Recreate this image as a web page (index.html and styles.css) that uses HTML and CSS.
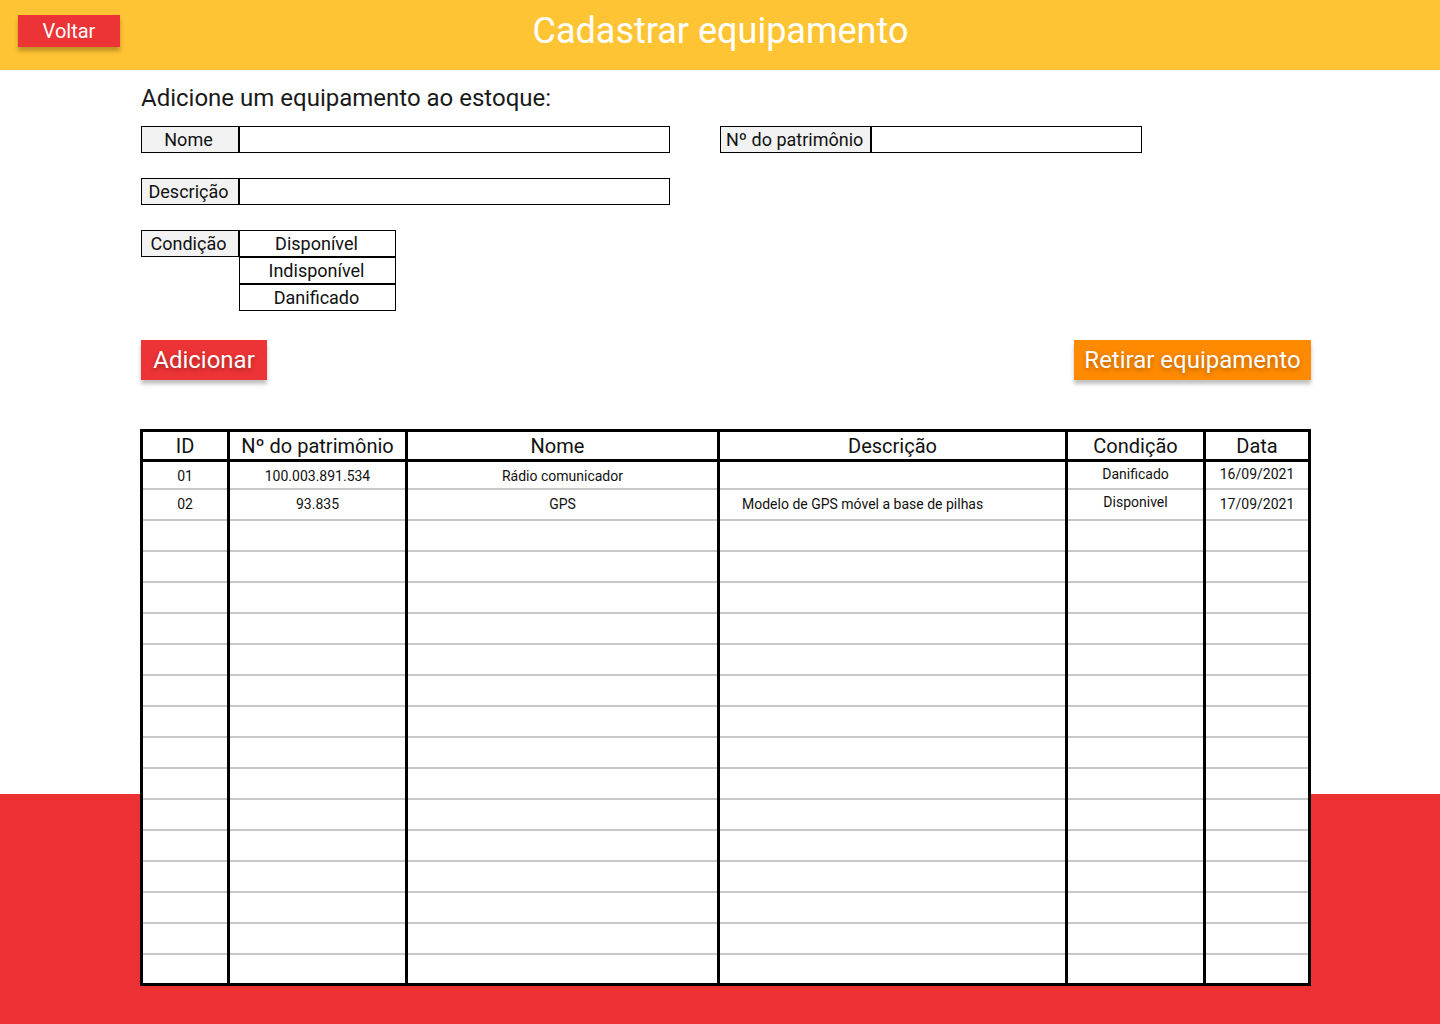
FILE: index.html
```html
<!DOCTYPE html>
<html lang="pt-BR">
<head>
<meta charset="utf-8">
<title>Cadastrar equipamento</title>
<link rel="stylesheet" href="styles.css">
</head>
<body>
<header class="topbar">
  <div class="topbar-left"><button class="btn btn-back">Voltar</button></div>
  <h1 class="title">Cadastrar equipamento</h1>
  <div class="topbar-right"></div>
</header>

<main class="content">
  <h2 class="subtitle">Adicione um equipamento ao estoque:</h2>

  <div class="form-grid">
    <div class="field">
      <span class="field-label">Nome</span>
      <span class="field-input w-main"></span>
    </div>
    <div class="field field-right">
      <span class="field-label label-wide">Nº do patrimônio</span>
      <span class="field-input w-side"></span>
    </div>
  </div>

  <div class="field">
    <span class="field-label">Descrição</span>
    <span class="field-input w-main"></span>
  </div>

  <div class="field field-cond">
    <span class="field-label">Condição</span>
    <div class="options">
      <span class="option">Disponível</span>
      <span class="option">Indisponível</span>
      <span class="option">Danificado</span>
    </div>
  </div>

  <div class="actions">
    <button class="btn btn-big btn-red">Adicionar</button>
    <button class="btn btn-big btn-orange">Retirar equipamento</button>
  </div>

  <table class="stock">
    <colgroup>
      <col class="c-id"><col class="c-pat"><col class="c-nome"><col class="c-desc"><col class="c-cond"><col class="c-data">
    </colgroup>
    <thead>
      <tr><th>ID</th><th>Nº do patrimônio</th><th class="th-nome">Nome</th><th>Descrição</th><th>Condição</th><th>Data</th></tr>
    </thead>
    <tbody>
      <tr class="r1"><td class="low">01</td><td class="low">100.003.891.534</td><td class="low">Rádio comunicador</td><td></td><td class="up">Danificado</td><td class="up">16/09/2021</td></tr>
      <tr><td>02</td><td>93.835</td><td>GPS</td><td class="left">Modelo de GPS móvel a base de pilhas</td><td class="up">Disponivel</td><td>17/09/2021</td></tr>
      <tr><td></td><td></td><td></td><td></td><td></td><td></td></tr>
      <tr><td></td><td></td><td></td><td></td><td></td><td></td></tr>
      <tr><td></td><td></td><td></td><td></td><td></td><td></td></tr>
      <tr><td></td><td></td><td></td><td></td><td></td><td></td></tr>
      <tr><td></td><td></td><td></td><td></td><td></td><td></td></tr>
      <tr><td></td><td></td><td></td><td></td><td></td><td></td></tr>
      <tr><td></td><td></td><td></td><td></td><td></td><td></td></tr>
      <tr><td></td><td></td><td></td><td></td><td></td><td></td></tr>
      <tr><td></td><td></td><td></td><td></td><td></td><td></td></tr>
      <tr><td></td><td></td><td></td><td></td><td></td><td></td></tr>
      <tr><td></td><td></td><td></td><td></td><td></td><td></td></tr>
      <tr><td></td><td></td><td></td><td></td><td></td><td></td></tr>
      <tr><td></td><td></td><td></td><td></td><td></td><td></td></tr>
      <tr><td></td><td></td><td></td><td></td><td></td><td></td></tr>
      <tr><td></td><td></td><td></td><td></td><td></td><td></td></tr>
    </tbody>
  </table>
</main>
</body>
</html>
```

FILE: styles.css
```css
* { box-sizing: border-box; }

html, body {
  margin: 0;
  padding: 0;
}

body {
  width: 1440px;
  min-height: 1024px;
  font-family: Roboto, "Noto Sans", "Liberation Sans", sans-serif;
  color: #1a1a1a;
  background: linear-gradient(to bottom, #ffffff 0, #ffffff 794px, #ec3134 794px, #ec3134 100%);
}

/* ---------- top bar ---------- */
.topbar {
  height: 70px;
  background: #ffc433;
  display: grid;
  grid-template-columns: 1fr auto 1fr;
  align-items: center;
}

.topbar-left {
  padding-left: 18px;
  align-self: start;
  padding-top: 15px;
}

.title {
  margin: 0;
  font-size: 36px;
  font-weight: 400;
  color: #ffffff;
  line-height: 1;
  padding-bottom: 8px;
  padding-left: 1px;
}

.btn {
  font-family: inherit;
  border: none;
  color: #ffffff;
  cursor: pointer;
  padding: 0;
}

.btn-back {
  width: 102px;
  height: 32px;
  background: #ec3335;
  font-size: 20px;
  box-shadow: 0 4px 4px rgba(0, 0, 0, 0.25);
}

/* ---------- content ---------- */
.content {
  margin-left: 140px;
  width: 1171px;
}

.subtitle {
  margin: 0;
  padding-top: 14px;
  font-size: 24px;
  font-weight: 400;
  line-height: 28px;
  color: #1a1a1a;
  padding-left: 1px;
}

.form-grid {
  display: flex;
  margin-top: 14px;
}

.field {
  display: flex;
  height: 27px;
  margin-left: 1px;
  margin-bottom: 25px;
}

.field-right {
  margin-left: 50px;
}

.field-label {
  display: flex;
  align-items: center;
  justify-content: center;
  width: 98px;
  height: 27px;
  border: 1px solid #000;
  background: #f2f2f2;
  font-size: 18px;
  color: #111;
  padding-right: 3px;
}

.label-wide {
  width: 151px;
  justify-content: flex-start;
  padding-left: 5px;
  padding-right: 0;
}

.field-input {
  display: block;
  height: 27px;
  border: 1px solid #000;
  background: #fff;
}

.w-main { width: 431px; }
.w-side { width: 271px; }

.field-cond {
  height: auto;
  align-items: flex-start;
  margin-bottom: 0;
}

.options {
  display: flex;
  flex-direction: column;
  width: 157px;
}

.option {
  display: flex;
  align-items: center;
  justify-content: center;
  height: 27px;
  border: 1px solid #000;
  font-size: 18px;
  color: #111;
  padding-right: 2px;
}

.actions {
  display: flex;
  justify-content: space-between;
  margin-top: 29px;
  padding-left: 1px;
}

.btn-big {
  height: 40px;
  font-size: 24px;
  padding: 0 12px;
  text-shadow: 0 2px 4px rgba(0, 0, 0, 0.3);
  box-shadow: 0 4px 4px rgba(0, 0, 0, 0.25);
}

.btn-red { background: #ec3335; width: 126px; }
.btn-orange { background: #ff8a00; width: 237px; padding: 0 10px; }

/* ---------- table ---------- */
.stock {
  margin-top: 49px;
  width: 1168px;
  border-collapse: collapse;
  table-layout: fixed;
  border: 3px solid #000;
  background: #fff;
}

.c-id { width: 87px; }
.c-pat { width: 178px; }
.c-nome { width: 312px; }
.c-desc { width: 348px; }
.c-cond { width: 138px; }
.c-data { width: 105px; }

.stock th {
  height: 30px;
  font-size: 20px;
  font-weight: 400;
  color: #111;
  border-left: 3px solid #000;
  border-right: 3px solid #000;
  border-bottom: 3px solid #000;
  padding: 0;
  line-height: 1;
}

.stock th.th-nome {
  padding-right: 10px;
}

.stock td {
  height: 31px;
  font-size: 14px;
  color: #111;
  text-align: center;
  border-left: 3px solid #000;
  border-right: 3px solid #000;
  border-bottom: 2px solid #c8c8c8;
  padding: 0;
}

.stock tbody tr:last-child td {
  border-bottom: 3px solid #000;
}

.stock tr.r1 td { height: 28px; }

.stock td.low {
  padding-top: 3px;
}

.stock td.left {
  text-align: left;
  padding-left: 22px;
}

.stock td.up {
  vertical-align: top;
  padding-top: 4px;
}
```
